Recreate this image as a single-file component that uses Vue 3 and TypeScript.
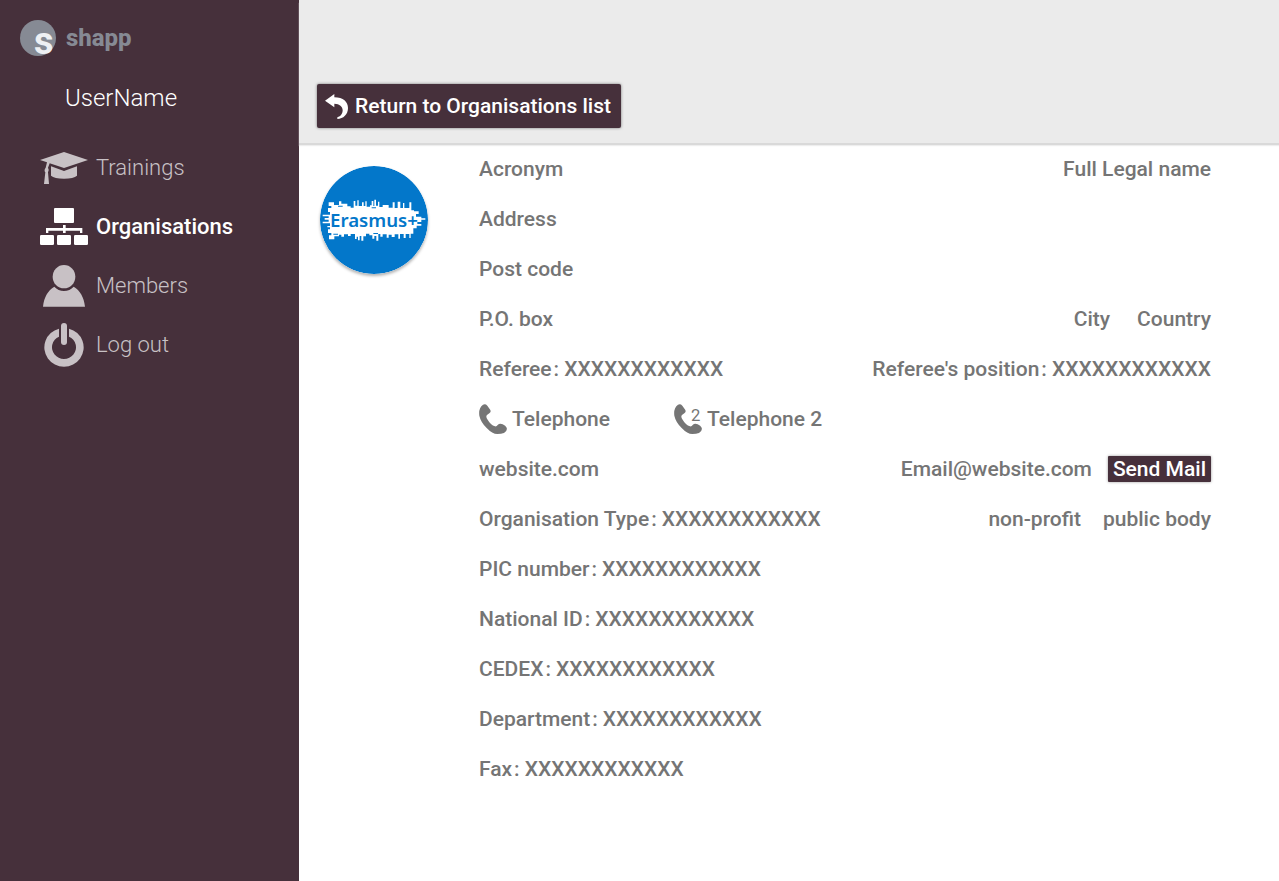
<script setup lang="ts">
interface Field {
  label: string
  value: string
}

const placeholder = 'XXXXXXXXXXXX'

const identifiers: Field[] = [
  { label: 'PIC number', value: placeholder },
  { label: 'National ID', value: placeholder },
  { label: 'CEDEX', value: placeholder },
  { label: 'Department', value: placeholder },
  { label: 'Fax', value: placeholder },
]
</script>

<template>
  <div class="layout">
    <aside class="sidebar">
      <a class="brand" href="#">
        <svg class="brand-mark" viewBox="0 0 36 36" aria-hidden="true">
          <circle cx="18" cy="18" r="18" fill="#868a94" />
          <text x="14" y="34" class="brand-letter">s</text>
        </svg>
        <span>shapp</span>
      </a>
      <p class="user">UserName</p>
      <nav class="menu">
        <a href="#">
          <svg width="48" height="32" viewBox="0 0 144 96" aria-hidden="true">
            <path d="M0 24 72 0l72 24-72 24-43-14-5 13q5 8 0 14l3 35H12l4-35q-5-6 1-14l4-16z" />
            <path d="M33 43 72 57l39-14v28q-10 9-39 9t-39-9z" />
          </svg>
          <span>Trainings</span>
        </a>
        <a href="#" class="active" aria-current="page">
          <svg width="48" height="37" viewBox="0 0 144 111" aria-hidden="true">
            <rect x="42" width="60" height="45" rx="3" />
            <path d="M69 51h8v9h50v15h-7v-7H77v7h-8v-7H25v7h-7V60h51z" />
            <rect y="81" width="42" height="30" rx="4" />
            <rect x="51" y="81" width="42" height="30" rx="4" />
            <rect x="102" y="81" width="42" height="30" rx="4" />
          </svg>
          <span>Organisations</span>
        </a>
        <a href="#">
          <svg width="42" height="42" viewBox="0 0 126 126" aria-hidden="true">
            <ellipse cx="63" cy="35" rx="34" ry="35" />
            <path d="M0 125C3 96 15 76 34 65c14 17 44 17 58 0 19 11 31 31 34 60z" />
          </svg>
          <span>Members</span>
        </a>
        <a href="#">
          <svg width="40" height="44" viewBox="0 0 120 132" aria-hidden="true">
            <path d="M45 17A59 58 0 1 0 75 17V41A36 35 0 1 1 45 41Z" />
            <rect x="51" width="18" height="66" rx="9" />
          </svg>
          <span>Log out</span>
        </a>
      </nav>
    </aside>

    <div class="content">
      <header class="topbar">
        <button type="button" class="return">
          <svg width="23" height="25" viewBox="0 0 69 75" aria-hidden="true">
            <path d="M0 20 28 0v10c27 0 41 14 41 32 0 20-14 32-32 33v-5c11-3 16-12 16-21 0-12-9-19-25-20v11z" />
          </svg>
          Return to Organisations list
        </button>
      </header>

      <main class="profile">
        <svg class="avatar" viewBox="0 0 324 324" role="img" aria-label="Erasmus+ logo">
          <circle cx="162" cy="162" r="162" fill="#0377ca" />
          <path
            fill="#fff"
            d="M8 146H30V138H24V126H34V120H26V109H42V117H57V106H64V113H82V121H92V125H101V105H106V119H112V103H116V120H126V109H131V120H136V106H140V122H150V118H155V105H160V120H163V101H168V119H174V107H178V123H188V117H206V125H218V109H224V126H233V107H241V126H249V111H253V126H268V109H274V133H282V136H296V144H288V152H304V157H316V161H304V168H292V174H304V179H290V187H280V203H272V216H268V204H257V216H251V204H240V218H235V205H224V213H215V206H206V215H200V205H188V212H181V204H175V224H169V210H163V218H157V208H148V203H138V211H130V224H124V210H119V223H114V212H110V219H105V204H92V210H84V205H72V212H64V206H57V211H43V220H27V208H34V201H24V190H30V184H22V180H30V172H8V167H26V161H14V156H26V151H8Z"
          />
          <path fill="#0377ca" d="M54 119H68V122H54zM155 124H168V127H155zM160 201H174V204H160zM40 203H54V206H40z" />
          <text x="30" y="184" class="avatar-text">Erasmus+</text>
        </svg>

        <div class="details">
          <div class="row">
            <span>Acronym</span>
            <span>Full Legal name</span>
          </div>
          <div class="row"><span>Address</span></div>
          <div class="row"><span>Post code</span></div>
          <div class="row">
            <span>P.O. box</span>
            <div class="group place">
              <span>City</span>
              <span>Country</span>
            </div>
          </div>
          <div class="row">
            <div class="field"><span>Referee</span><span class="colon">:</span><span>{{ placeholder }}</span></div>
            <div class="field"><span>Referee's position</span><span class="colon">:</span><span>{{ placeholder }}</span></div>
          </div>
          <div class="row phones">
            <div class="phone">
              <svg width="28" height="30" viewBox="0 0 84 90" aria-hidden="true">
                <path d="M12 2q7-4 13 3l9 13q3 6-3 10l-7 5q-4 4 0 11 11 19 24 23 5 1 8-4 6-6 15-2 9 4 12 10 3 9-8 16-8 3-20 3-15 0-32-18Q5 54 1 35-2 12 12 2z" />
              </svg>
              <span>Telephone</span>
            </div>
            <div class="phone">
              <svg width="28" height="30" viewBox="0 0 84 90" aria-hidden="true">
                <path d="M12 2q7-4 13 3l9 13q3 6-3 10l-7 5q-4 4 0 11 11 19 24 23 5 1 8-4 6-6 15-2 9 4 12 10 3 9-8 16-8 3-20 3-15 0-32-18Q5 54 1 35-2 12 12 2z" />
                <text x="51" y="50" class="phone-digit">2</text>
              </svg>
              <span>Telephone 2</span>
            </div>
          </div>
          <div class="row">
            <a href="#">website.com</a>
            <div class="group mail">
              <span>Email@website.com</span>
              <button type="button" class="send">Send Mail</button>
            </div>
          </div>
          <div class="row">
            <div class="field"><span>Organisation Type</span><span class="colon">:</span><span>{{ placeholder }}</span></div>
            <div class="group status">
              <span>non-profit</span>
              <span>public body</span>
            </div>
          </div>
          <div v-for="item in identifiers" :key="item.label" class="row">
            <div class="field"><span>{{ item.label }}</span><span class="colon">:</span><span>{{ item.value }}</span></div>
          </div>
        </div>
      </main>
    </div>
  </div>
</template>

<style>
body {
  margin: 0;
}
</style>

<style scoped>
.layout {
  display: flex;
  min-height: 100vh;
  font-family: Roboto, sans-serif;
  color: #757575;
  background: #fff;
}

a {
  color: inherit;
  text-decoration: none;
}

button {
  border: 0;
  font: inherit;
  color: #fff;
  background: #46303b;
  cursor: pointer;
}

svg {
  flex: none;
  fill: currentColor;
}

.sidebar {
  flex: none;
  box-sizing: border-box;
  width: 299px;
  padding: 20px;
  background: #46303b;
}

.brand {
  display: flex;
  align-items: center;
  gap: 10px;
  height: 36px;
  font-size: 24px;
  font-weight: 800;
  line-height: 32px;
  color: #868a94;
}

.brand-mark {
  width: 36px;
  height: 36px;
  overflow: visible;
}

.brand-letter {
  font-size: 38px;
  font-weight: 700;
  fill: #eef0f3;
}

.user {
  margin: 26px 0 24px 45px;
  font-size: 24px;
  font-weight: 300;
  line-height: 32px;
  color: #fff;
}

.menu a {
  display: grid;
  grid-template-columns: 48px 1fr;
  align-items: center;
  gap: 8px;
  height: 59px;
  margin-left: 20px;
  font-size: 22px;
  font-weight: 300;
  color: #c8c1c5;
}

.menu svg {
  justify-self: center;
}

.menu .active {
  font-weight: 500;
  color: #fff;
}

.content {
  flex: 1;
  min-width: 0;
}

.topbar {
  box-sizing: border-box;
  height: 143px;
  padding: 84px 18px 0;
  background: #ebebeb;
  box-shadow: 0 2px 0 #d9d9d9, 0 3px 1px #eee;
}

.return {
  display: flex;
  align-items: center;
  gap: 7px;
  height: 44px;
  padding: 0 10px 0 8px;
  border-radius: 2px;
  font-size: 21px;
  font-weight: 500;
  box-shadow: 0 0 3px rgba(0, 0, 0, 0.5);
}

.profile {
  display: flex;
  padding: 1px 68px 60px 21px;
}

.avatar {
  width: 108px;
  height: 108px;
  margin: 22px 51px 0 0;
  border-radius: 50%;
  box-shadow: 0 2px 3px rgba(0, 0, 0, 0.3);
}

.avatar-text {
  font-family: "Noto Sans", sans-serif;
  font-size: 56px;
  font-weight: 600;
  fill: #0377ca;
}

.details {
  flex: 1;
  font-size: 21px;
  font-weight: 500;
  line-height: 24px;
}

.row {
  display: flex;
  align-items: center;
  justify-content: space-between;
  height: 50px;
  white-space: nowrap;
}

.group {
  display: flex;
  align-items: center;
}

.place {
  gap: 27px;
}

.status {
  gap: 22px;
}

.mail {
  gap: 16px;
}

.colon {
  margin: 0 5px 0 2px;
}

.phones {
  justify-content: flex-start;
  gap: 64px;
}

.phone {
  display: flex;
  align-items: center;
  gap: 5px;
}

.phone-digit {
  font-size: 50px;
  font-weight: 400;
}

.send {
  height: 26px;
  padding: 0 5px;
  border-radius: 1px;
  line-height: 26px;
  box-shadow: 0 0 3px rgba(0, 0, 0, 0.4);
}
</style>
